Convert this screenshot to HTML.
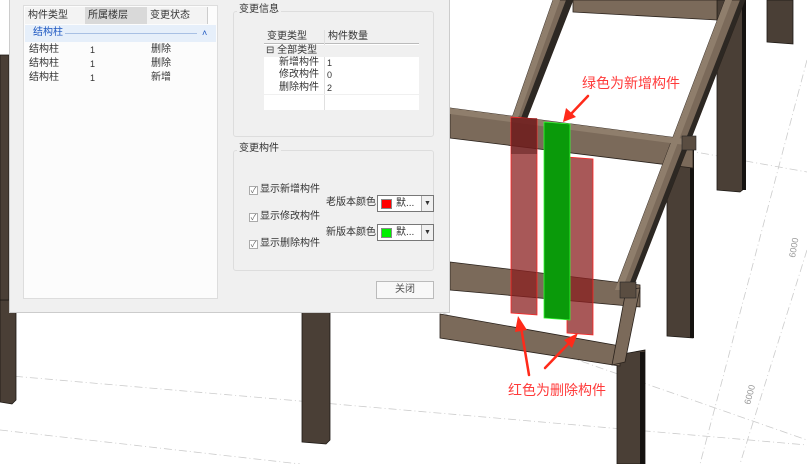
<!DOCTYPE html>
<html><head><meta charset="utf-8"><style>
*{margin:0;padding:0;box-sizing:border-box}
body{width:807px;height:464px;overflow:hidden;background:#fff;position:relative;font-family:"Liberation Sans","Noto Sans CJK SC",sans-serif;font-size:10px;line-height:12px;color:#333}
.a{position:absolute}
.cb{display:inline-block;width:9px;height:9px;border:1px solid #aaa;background:#fff;font-size:8px;line-height:7px;text-align:center;color:#666;margin-right:2px;vertical-align:-1px}
</style></head><body>
<svg class="a" style="left:0;top:0" width="807" height="464" viewBox="0 0 807 464">
<g stroke="#ccc" stroke-dasharray="8 3 1 3" stroke-width="0.8" fill="none">
<line x1="450" y1="108" x2="807" y2="172"/><line x1="440" y1="312" x2="807" y2="440"/>
<line x1="0" y1="375" x2="807" y2="445"/><line x1="0" y1="430" x2="300" y2="464"/>
<line x1="807" y1="60" x2="700" y2="464"/><line x1="807" y1="250" x2="740" y2="464"/>
</g>
<text x="795" y="258" font-size="9" fill="#999" transform="rotate(-80 795 258)">6000</text>
<text x="750" y="405" font-size="9" fill="#999" transform="rotate(-75 750 405)">6000</text>
<g fill="#4a3f36" stroke="#1c1814" stroke-width="0.8">
<polygon points="717,0 745,0 745,188 740,192 717,190"/>
<polygon points="767,0 793,0 793,44 767,42"/>
<polygon points="667,148 693,150 693,338 667,336"/>
<polygon points="617,355 645,350 645,464 617,464"/>
<polygon points="302,310 330,312 330,440 326,444 302,442"/>
<polygon points="0,300 16,300 16,400 12,404 0,402"/>
<polygon points="0,55 9,55 9,300 0,300"/>
</g>
<rect x="742" y="0" width="4" height="190" fill="#151210"/>
<rect x="690" y="150" width="4" height="188" fill="#151210"/>
<rect x="640" y="352" width="5" height="112" fill="#151210"/>
<g fill="#7b6a5a" stroke="#2a221c" stroke-width="0.8">
<polygon points="573,0 717,0 717,20 573,12"/>
<polygon points="553,0 573,0 527,118 512,118"/>
<polygon points="450,108 693,140 693,168 450,138"/>
<polygon points="725,0 745,0 632,290 615,290"/>
<polygon points="450,262 640,285 640,307 450,290"/>
<polygon points="440,314 620,346 620,366 440,338"/>
<polygon points="626,290 640,288 625,362 612,365"/>
</g>
<polygon points="450,108 693,140 693,146 450,114" fill="#8f7e6c"/>
<polygon points="553,0 560,0 518,118 512,118" fill="#8f7e6c"/>
<polygon points="725,0 732,0 622,290 615,290" fill="#8f7e6c"/>
<polygon points="566,0 573,0 527,118 521,118" fill="#2d2823"/>
<polygon points="740,0 745,0 632,290 627,290" fill="#2d2823"/>
<rect x="682" y="136" width="14" height="14" fill="#5a4d41" stroke="#222" stroke-width="0.6"/>
<rect x="620" y="282" width="16" height="16" fill="#5a4d41" stroke="#222" stroke-width="0.6"/>
<polygon points="511,117 537,119 537,315 511,313" fill="#8b2020" fill-opacity="0.75" stroke="#f22" stroke-width="0.8"/>
<rect x="511" y="118" width="26" height="36" fill="#5a1a1a" fill-opacity="0.5"/>
<polygon points="567,157 593,159 593,335 567,333" fill="#8b2020" fill-opacity="0.75" stroke="#f22" stroke-width="0.8"/>
<polygon points="544,122 570,124 570,320 544,318" fill="#0a9a0a" stroke="#3f3" stroke-width="0.8"/>
<text x="582" y="88" font-size="14" fill="#ff3b3b" font-family="Noto Sans CJK SC,sans-serif">绿色为新增构件</text>
<text x="508" y="395" font-size="14" fill="#ff3b3b" font-family="Noto Sans CJK SC,sans-serif">红色为删除构件</text>
<g stroke="#ff2a1a" stroke-width="2.5" stroke-linecap="round">
<line x1="588" y1="96" x2="570" y2="115"/>
<line x1="529" y1="375" x2="521" y2="327"/>
<line x1="545" y1="368" x2="572" y2="340"/>
</g>
<g fill="#ff2a1a">
<polygon points="563,122 566,108 576,117"/>
<polygon points="518,316 515,332 527,330"/>
<polygon points="578,333 564,340 572,348"/>
</g>
</svg>
<div class="a" style="left:9px;top:0;width:441px;height:313px;background:#f0f0f0;border:1px solid #ccc;border-top:none"></div>
<div class="a" style="left:23px;top:5px;width:195px;height:294px;background:#fcfcfc;border:1px solid #ddd"></div>
<div class="a" style="left:25px;top:7px;width:60px;height:17px;background:#f3f3f3;line-height:17px;padding-left:3px">构件类型</div>
<div class="a" style="left:85px;top:7px;width:62px;height:17px;background:#d9d9d9;line-height:17px;padding-left:3px">所属楼层</div>
<div class="a" style="left:147px;top:7px;width:61px;height:17px;background:#f3f3f3;line-height:17px;padding-left:3px;border-right:1px solid #ccc">变更状态</div>
<div class="a" style="left:25px;top:25px;width:191px;height:17px;background:#e6effa"></div>
<div class="a" style="left:33px;top:27px;color:#1a55c0">结构柱</div>
<div class="a" style="left:65px;top:33px;width:132px;height:1px;background:#a8c0e4"></div>
<div class="a" style="left:202px;top:27px;color:#1a55c0;font-size:9px">˄</div>
<div class="a" style="left:29px;top:43px;line-height:14px">结构柱<br>结构柱<br>结构柱</div>
<div class="a" style="left:90px;top:43px;line-height:14px;font-size:9px">1<br>1<br>1</div>
<div class="a" style="left:151px;top:43px;line-height:14px">删除<br>删除<br>新增</div>
<div class="a" style="left:233px;top:11px;width:201px;height:126px;border:1px solid #ddd;border-radius:3px"></div>
<div class="a" style="left:237px;top:4px;background:#f0f0f0;padding:0 2px">变更信息</div>
<div class="a" style="left:264px;top:30px;width:155px;height:80px;background:#fff"></div>
<div class="a" style="left:264px;top:30px;width:155px;height:14px;background:#f0f0f0;border-bottom:1px solid #bbb"></div>
<div class="a" style="left:324px;top:30px;width:1px;height:80px;background:#e0e0e0"></div>
<div class="a" style="left:267px;top:31px">变更类型</div>
<div class="a" style="left:328px;top:31px">构件数量</div>
<div class="a" style="left:264px;top:45px;width:155px;height:12px;background:#f0f0f0"></div>
<div class="a" style="left:264px;top:94px;width:155px;height:1px;background:#f0f0f0"></div>
<div class="a" style="left:266px;top:45px">⊟ 全部类型</div>
<div class="a" style="left:279px;top:57px;line-height:12.3px">新增构件<br>修改构件<br>删除构件</div>
<div class="a" style="left:327px;top:57px;line-height:12.3px;font-size:9px">1<br>0<br>2</div>
<div class="a" style="left:233px;top:150px;width:201px;height:121px;border:1px solid #ddd;border-radius:3px"></div>
<div class="a" style="left:237px;top:143px;background:#f0f0f0;padding:0 2px">变更构件</div>
<div class="a" style="left:249px;top:176px;line-height:27px"><span class="cb">✓</span>显示新增构件<br><span class="cb">✓</span>显示修改构件<br><span class="cb">✓</span>显示删除构件</div>
<div class="a" style="left:326px;top:197px">老版本颜色</div>
<div class="a" style="left:326px;top:227px">新版本颜色</div>
<div class="a" style="left:377px;top:195px;width:57px;height:17px;background:#fff;border:1px solid #777"><div class="a" style="left:3px;top:3px;width:11px;height:10px;background:#f00;border:1px solid #888"></div><div class="a" style="left:18px;top:2px">默...</div><div class="a" style="left:43px;top:0;width:12px;height:15px;background:#f0f0f0;border-left:1px solid #aaa;font-size:7px;text-align:center;line-height:15px">▼</div></div>
<div class="a" style="left:377px;top:224px;width:57px;height:17px;background:#fff;border:1px solid #777"><div class="a" style="left:3px;top:3px;width:11px;height:10px;background:#0e0;border:1px solid #888"></div><div class="a" style="left:18px;top:2px">默...</div><div class="a" style="left:43px;top:0;width:12px;height:15px;background:#f0f0f0;border-left:1px solid #aaa;font-size:7px;text-align:center;line-height:15px">▼</div></div>
<div class="a" style="left:376px;top:281px;width:58px;height:18px;border:1px solid #bbb;background:#f8f8f8;text-align:center;line-height:16px;color:#555">关闭</div>
</body></html>
